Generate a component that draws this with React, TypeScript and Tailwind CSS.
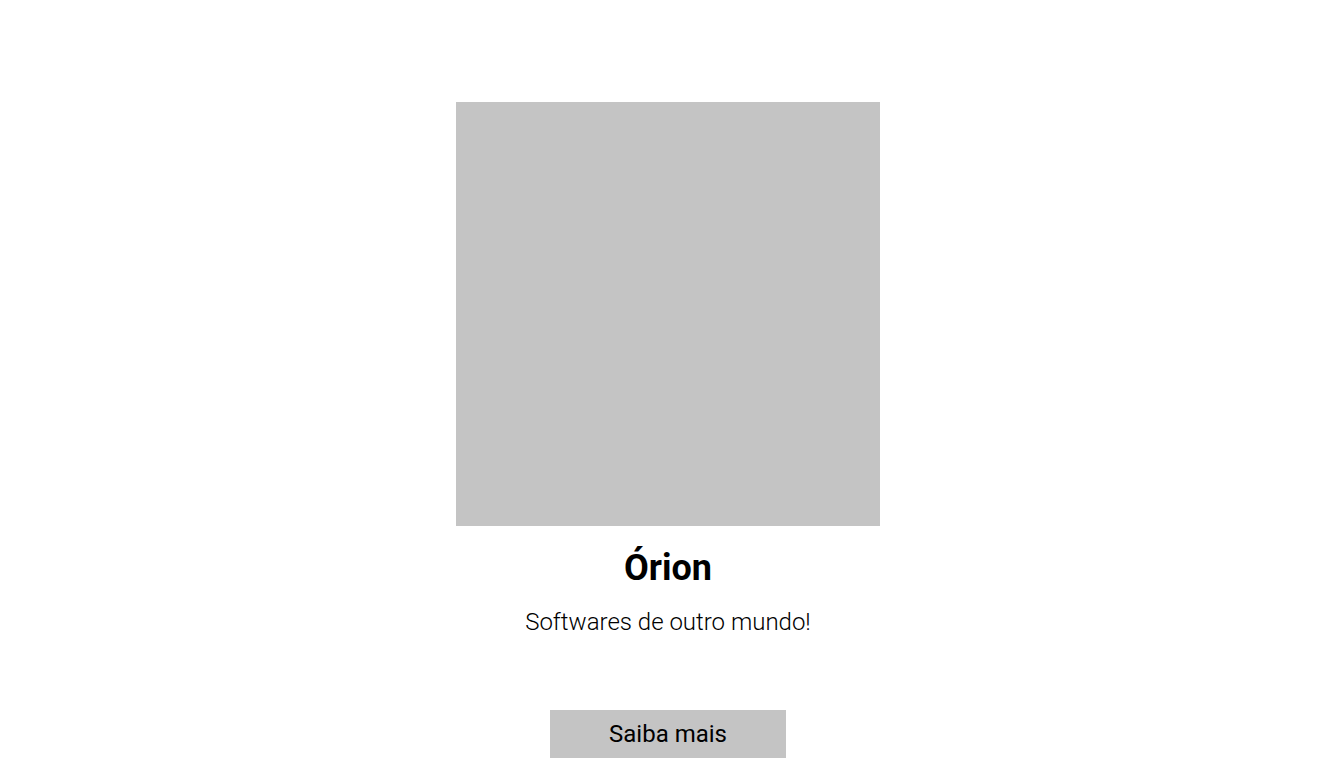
export default function App() {
    return (
        <main className="min-h-screen bg-white font-['Roboto',sans-serif] text-black">
            <section className="flex flex-col items-center pt-[102px]">
                <div className="h-[424px] w-[424px] bg-[#c4c4c4]" />
                <h1 className="mt-[21px] text-[36px] leading-[42px] font-bold">Órion</h1>
                <p className="mt-[19px] text-[24px] leading-[28px] font-light">Softwares de outro mundo!</p>
                <button className="mt-[74px] h-[48px] w-[236px] bg-[#c4c4c4] text-[24px] leading-[28px]">
                    Saiba mais
                </button>
            </section>
        </main>
    );
}
